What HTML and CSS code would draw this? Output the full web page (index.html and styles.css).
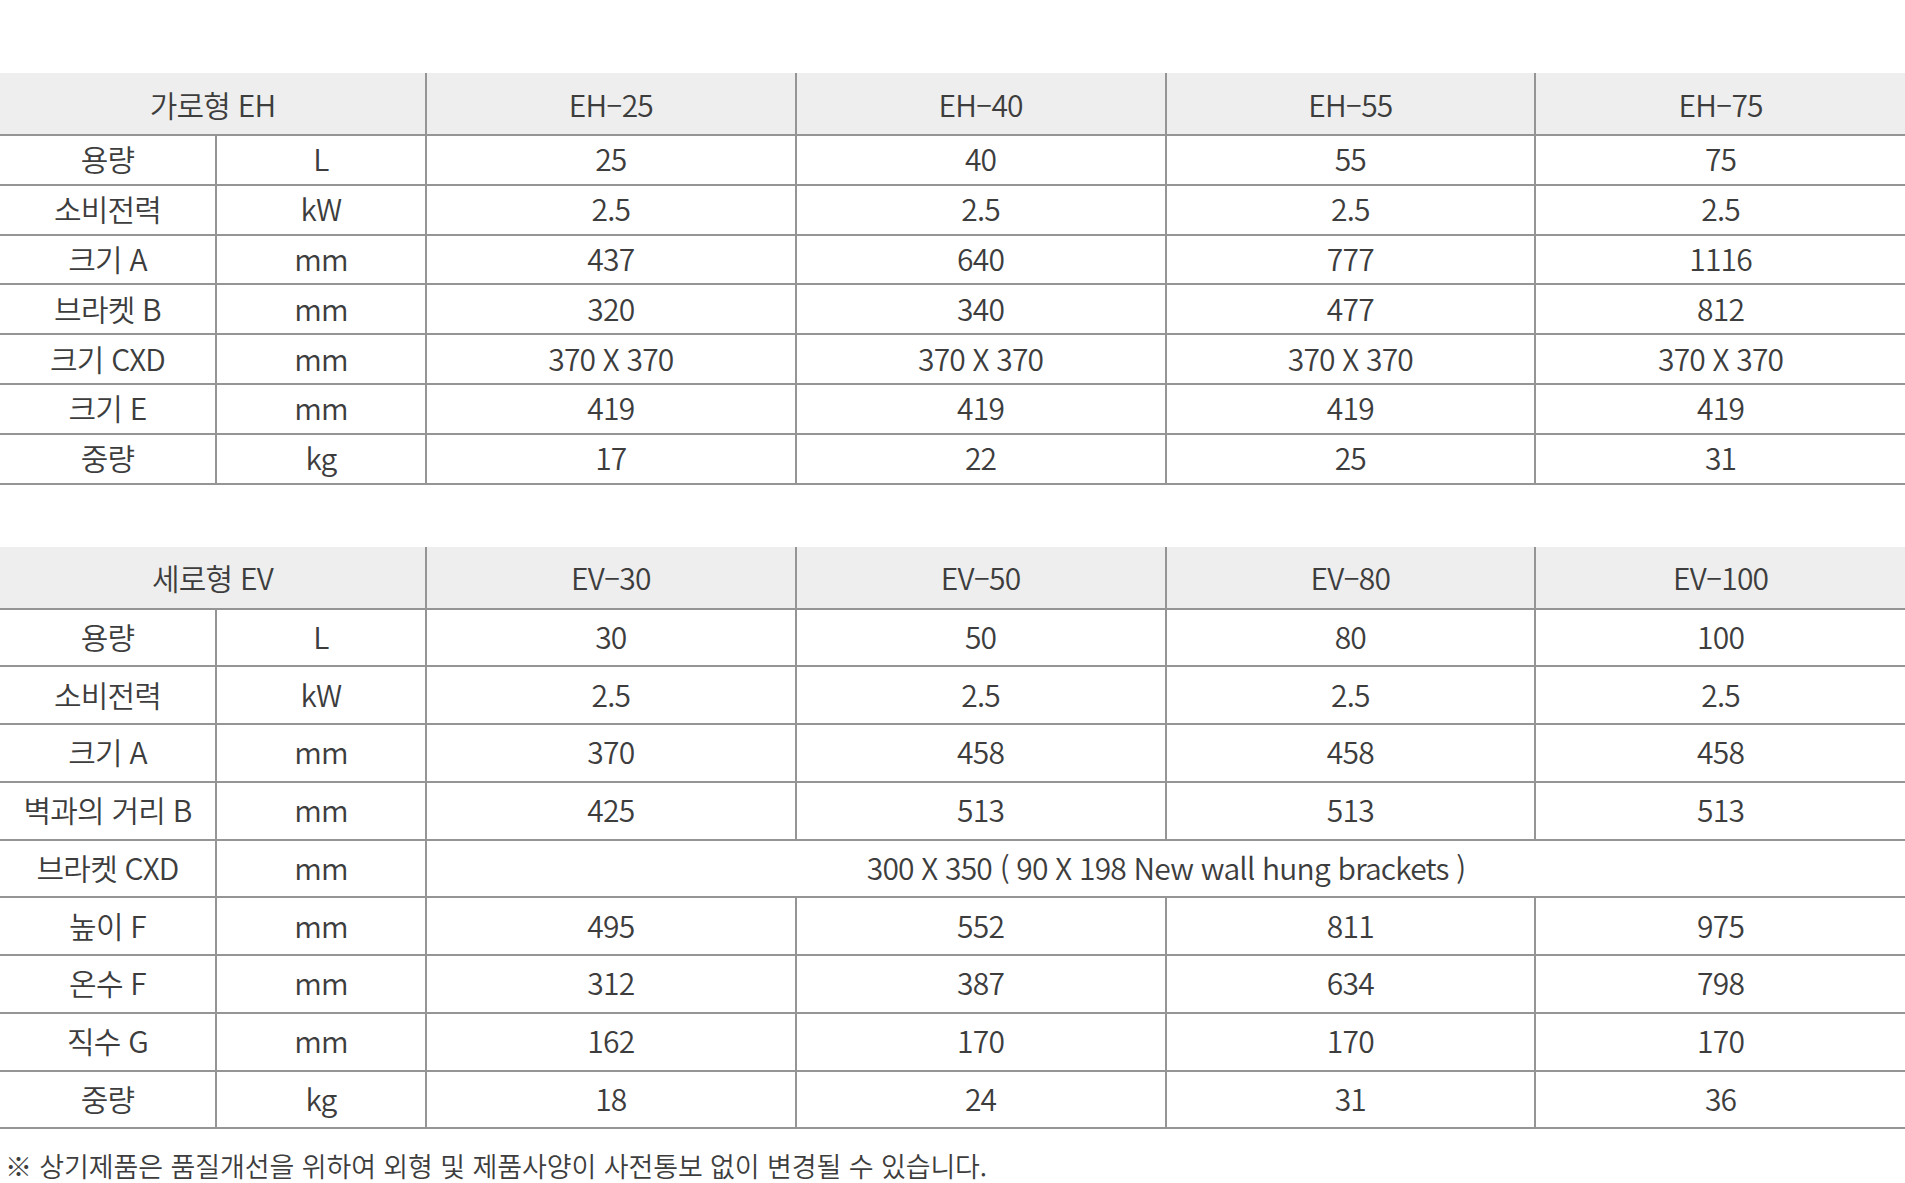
FILE: index.html
```html
<!DOCTYPE html>
<html lang="ko">
<head>
<meta charset="utf-8">
<title>제품 사양</title>
<link rel="stylesheet" href="styles.css">
</head>
<body>
<div class="page">
  <table class="spec spec-eh">
    <colgroup>
      <col class="c-name"><col class="c-unit"><col class="c-val"><col class="c-val"><col class="c-val"><col class="c-val">
    </colgroup>
    <thead>
      <tr>
        <th colspan="2">가로형 EH</th>
        <th>EH–25</th>
        <th>EH–40</th>
        <th>EH–55</th>
        <th>EH–75</th>
      </tr>
    </thead>
    <tbody>
      <tr><td>용량</td><td>L</td><td>25</td><td>40</td><td>55</td><td>75</td></tr>
      <tr><td>소비전력</td><td>kW</td><td>2.5</td><td>2.5</td><td>2.5</td><td>2.5</td></tr>
      <tr><td>크기 A</td><td>mm</td><td>437</td><td>640</td><td>777</td><td>1116</td></tr>
      <tr><td>브라켓 B</td><td>mm</td><td>320</td><td>340</td><td>477</td><td>812</td></tr>
      <tr><td>크기 CXD</td><td>mm</td><td>370 X 370</td><td>370 X 370</td><td>370 X 370</td><td>370 X 370</td></tr>
      <tr><td>크기 E</td><td>mm</td><td>419</td><td>419</td><td>419</td><td>419</td></tr>
      <tr><td>중량</td><td>kg</td><td>17</td><td>22</td><td>25</td><td>31</td></tr>
    </tbody>
  </table>

  <table class="spec spec-ev">
    <colgroup>
      <col class="c-name"><col class="c-unit"><col class="c-val"><col class="c-val"><col class="c-val"><col class="c-val">
    </colgroup>
    <thead>
      <tr>
        <th colspan="2">세로형 EV</th>
        <th>EV–30</th>
        <th>EV–50</th>
        <th>EV–80</th>
        <th>EV–100</th>
      </tr>
    </thead>
    <tbody>
      <tr><td>용량</td><td>L</td><td>30</td><td>50</td><td>80</td><td>100</td></tr>
      <tr><td>소비전력</td><td>kW</td><td>2.5</td><td>2.5</td><td>2.5</td><td>2.5</td></tr>
      <tr><td>크기 A</td><td>mm</td><td>370</td><td>458</td><td>458</td><td>458</td></tr>
      <tr><td>벽과의 거리 B</td><td>mm</td><td>425</td><td>513</td><td>513</td><td>513</td></tr>
      <tr><td>브라켓 CXD</td><td>mm</td><td colspan="4">300 X 350 ( 90 X 198 New wall hung brackets )</td></tr>
      <tr><td>높이 F</td><td>mm</td><td>495</td><td>552</td><td>811</td><td>975</td></tr>
      <tr><td>온수 F</td><td>mm</td><td>312</td><td>387</td><td>634</td><td>798</td></tr>
      <tr><td>직수 G</td><td>mm</td><td>162</td><td>170</td><td>170</td><td>170</td></tr>
      <tr><td>중량</td><td>kg</td><td>18</td><td>24</td><td>31</td><td>36</td></tr>
    </tbody>
  </table>

  <p class="note">※ 상기제품은 품질개선을 위하여 외형 및 제품사양이 사전통보 없이 변경될 수 있습니다.</p>
</div>
</body>
</html>
```

FILE: styles.css
```css
html, body {
  margin: 0;
  padding: 0;
  background: #ffffff;
}

body {
  font-family: "Noto Sans CJK KR", "Noto Sans", sans-serif;
  font-weight: 350;
  color: #3d3d3d;
}

.page {
  width: 1905px;
  padding-top: 73px;
}

.spec {
  width: 1905px;
  table-layout: fixed;
  border-collapse: collapse;
  font-size: 30px;
  letter-spacing: -0.8px;
}

.spec-ev {
  margin-top: 62px;
}

.c-name { width: 216px; }
.c-unit { width: 210px; }
.c-val  { width: 369.75px; }

.spec th,
.spec td {
  padding: 0;
  text-align: center;
  vertical-align: middle;
  font-weight: 350;
  white-space: nowrap;
  border: 2px solid #959595;
  line-height: 1;
}

.spec td {
  padding-bottom: 3px;
}

.spec th {
  background: #eeeeee;
  height: 61px;
  border-top: none;
  border-bottom: none;
}

.spec tr > :first-child { border-left: none; }
.spec tr > :last-child { border-right: none; }

.spec-eh td { height: 44.8px; }
.spec-ev td { height: 52.75px; }

.note {
  margin: 23px 0 0 5px;
  font-size: 27px;
  line-height: 28px;
  letter-spacing: -0.1px;
  color: #3d3d3d;
}
```
